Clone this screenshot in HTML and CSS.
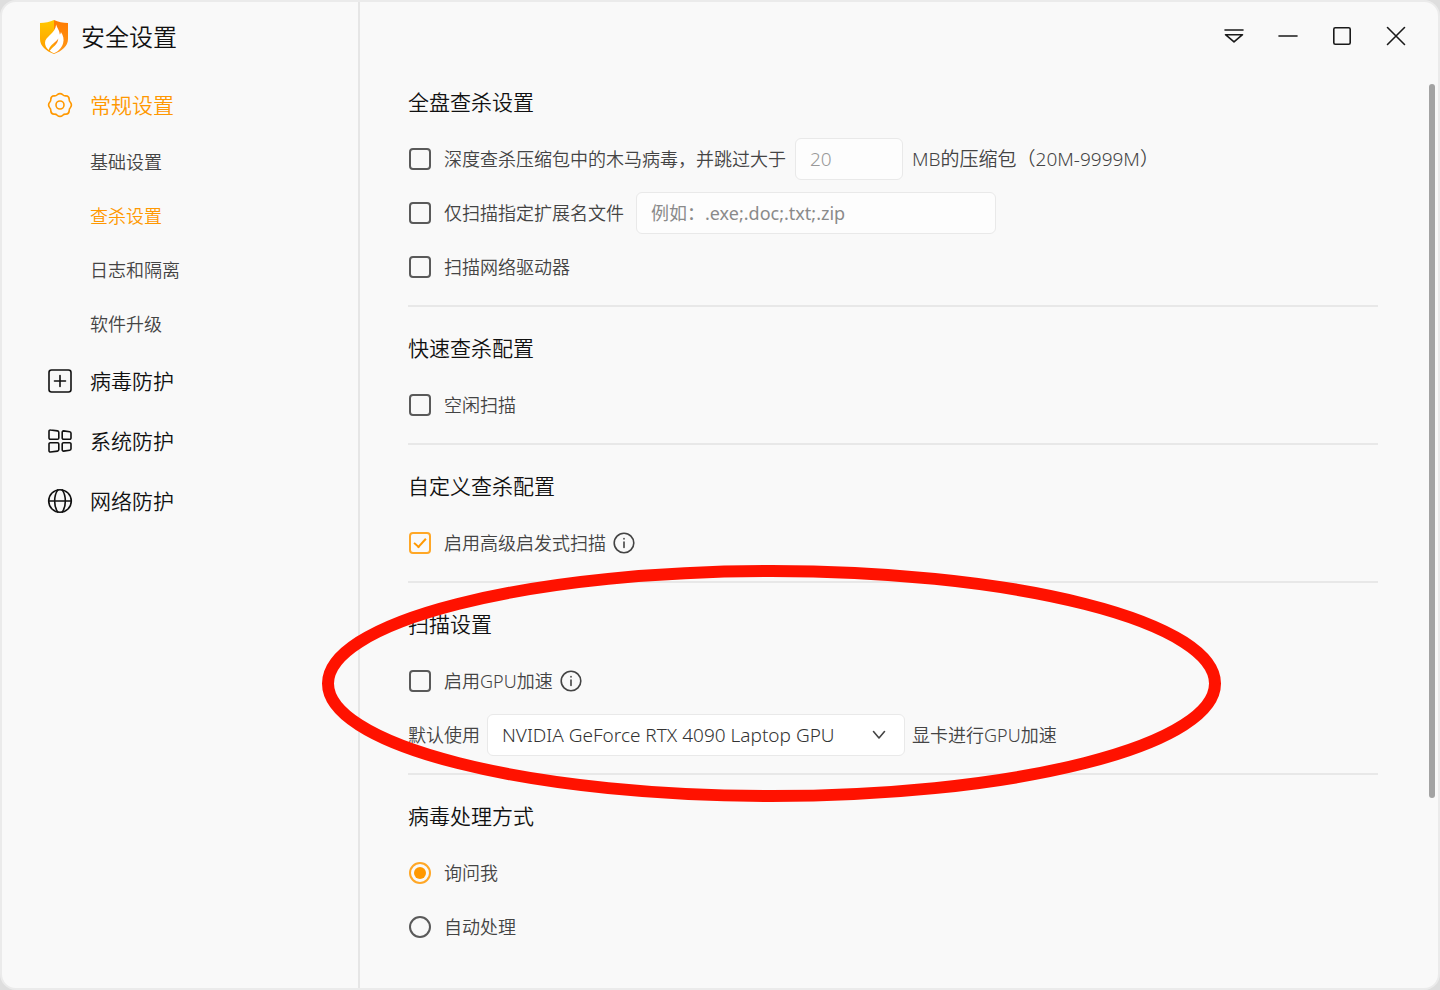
FILE: index.html
```html
<!DOCTYPE html>
<html lang="zh-CN">
<head>
<meta charset="utf-8">
<title>安全设置</title>
<link rel="stylesheet" href="styles.css">
</head>
<body>
<div class="window">
  <aside class="sidebar">
    <div class="brand">
      <svg class="brand-logo" width="30" height="36" viewBox="0 0 30 36" aria-hidden="true">
        <defs>
          <linearGradient id="gold" x1="0" y1="0" x2="0" y2="1"><stop offset="0" stop-color="#ffc800"/><stop offset="1" stop-color="#ff9a00"/></linearGradient>
          <linearGradient id="amber" x1="0" y1="0" x2="0" y2="1"><stop offset="0" stop-color="#ff7a00"/><stop offset="1" stop-color="#ff9a1a"/></linearGradient>
        </defs>
        <path d="M15 1C11 3 6 4 1 4v16c0 7 6 12 14 15z" fill="url(#gold)"/>
        <path d="M15 1c4 2 9 3 14 3v16c0 7-6 12-14 15z" fill="url(#amber)"/>
        <path d="M17.200 5.500C18 9 20.500 11 20.800 15.500c.8-.8 1-1.600 1.100-2.500 2.500 3.500 3.300 7.500 2.200 11.200C22.500 29.500 19 32.500 15 34.300c-1.500-.6-3-1.400-4.300-2.500 2.800-3.800 8.300-6.300 8.600-12.300-2.500 4-8.300 6-9.500 11.500C7.300 29 6 26.500 6 23.700c0-6 10.200-9 11.200-18.200z" fill="#fff"/>
      </svg>
      <h1 class="brand-title">安全设置</h1>
    </div>
    <nav class="nav">
      <a class="nav-item active" href="#general">
        <svg class="icon" width="26" height="26" viewBox="0 0 26 26" aria-hidden="true"><path d="M10.300 2.700Q13 .5 15.700 2.700Q17 4 18.900 3.800Q22 4 22.200 7.100Q22 9 23.300 10.300Q25.500 13 23.300 15.700Q22 17 22.200 18.900Q22 22 18.900 22.200Q17 22 15.700 23.300Q13 25.500 10.300 23.300Q9 22 7.100 22.200Q4 22 3.800 18.900Q4 17 2.700 15.700Q.5 13 2.700 10.300Q4 9 3.800 7.100Q4 4 7.100 3.800Q9 4 10.300 2.700Z"/><circle cx="13" cy="13" r="4"/></svg>
        <span>常规设置</span>
      </a>
      <a class="nav-sub" href="#basic">基础设置</a>
      <a class="nav-sub active" href="#scan">查杀设置</a>
      <a class="nav-sub" href="#logs">日志和隔离</a>
      <a class="nav-sub" href="#update">软件升级</a>
      <a class="nav-item" href="#virus">
        <svg class="icon" width="26" height="26" viewBox="0 0 26 26" aria-hidden="true"><rect x="2" y="2" width="22" height="22" rx="2.500"/><path d="M13 7.500v11M7.500 13h11"/></svg>
        <span>病毒防护</span>
      </a>
      <a class="nav-item" href="#system">
        <svg class="icon" width="26" height="26" viewBox="0 0 26 26" aria-hidden="true"><path d="M3.500 2l7 .9a1.500 1.500 0 0 1 1.300 1.500V10a1.300 1.300 0 0 1-1.300 1.300H3.300A1.300 1.300 0 0 1 2 10V3.400A1.300 1.300 0 0 1 3.500 2zM16.500 2.900l6.200.9A1.500 1.500 0 0 1 24 5.300V10a1.300 1.300 0 0 1-1.300 1.300h-6.200A1.300 1.300 0 0 1 15.200 10V4.200a1.300 1.300 0 0 1 1.300-1.300zM3.300 14.700h7.200a1.300 1.300 0 0 1 1.300 1.300v5.600a1.500 1.500 0 0 1-1.300 1.500l-7 .9A1.300 1.300 0 0 1 2 22.600V16a1.300 1.300 0 0 1 1.300-1.300zM16.500 14.700h6.200A1.300 1.300 0 0 1 24 16v4.700a1.500 1.500 0 0 1-1.300 1.500l-6.200.9a1.300 1.300 0 0 1-1.300-1.300V16a1.300 1.300 0 0 1 1.300-1.300z"/></svg>
        <span>系统防护</span>
      </a>
      <a class="nav-item" href="#network">
        <svg class="icon" width="26" height="26" viewBox="0 0 26 26" aria-hidden="true"><circle cx="13" cy="13" r="11.300"/><path d="M1.700 13h22.600M10.800 1.900C6.600 8 6.600 18 10.800 24.100M15.200 1.900C19.400 8 19.400 18 15.200 24.100"/></svg>
        <span>网络防护</span>
      </a>
    </nav>
  </aside>

  <main class="main">
    <header class="controls">
      <button class="control" type="button" aria-label="菜单"><svg width="20" height="20" viewBox="0 0 20 20"><path d="M1 4h18M1.500 8.700h17L10 15.900z"/></svg></button>
      <button class="control" type="button" aria-label="最小化"><svg width="20" height="20" viewBox="0 0 20 20"><path d="M1 10h18"/></svg></button>
      <button class="control" type="button" aria-label="最大化"><svg width="20" height="20" viewBox="0 0 20 20"><rect x="1.800" y="1.800" width="16.400" height="16.400" rx="1.500"/></svg></button>
      <button class="control" type="button" aria-label="关闭"><svg width="20" height="20" viewBox="0 0 20 20"><path d="M1.500 1.500l17 17M18.500 1.500l-17 17"/></svg></button>
    </header>

    <div class="content">
      <section class="section">
        <h2 class="heading">全盘查杀设置</h2>
        <div class="row wide-gap">
          <label class="choice"><input class="tick" type="checkbox">深度查杀压缩包中的木马病毒，并跳过大于</label>
          <input class="field size-field" type="text" value="20" aria-label="压缩包大小" disabled>
          <span class="unit">MB的压缩包（20M-9999M）</span>
        </div>
        <div class="row wider-gap">
          <label class="choice"><input class="tick" type="checkbox">仅扫描指定扩展名文件</label>
          <input class="field ext-field" type="text" placeholder="例如：.exe;.doc;.txt;.zip" aria-label="扩展名">
        </div>
        <div class="row"><label class="choice"><input class="tick" type="checkbox">扫描网络驱动器</label></div>
      </section>

      <section class="section">
        <h2 class="heading">快速查杀配置</h2>
        <div class="row"><label class="choice"><input class="tick" type="checkbox">空闲扫描</label></div>
      </section>

      <section class="section">
        <h2 class="heading">自定义查杀配置</h2>
        <div class="row">
          <label class="choice"><input class="tick" type="checkbox" checked>启用高级启发式扫描</label>
          <svg class="info" width="22" height="22" viewBox="0 0 22 22" aria-hidden="true"><circle cx="11" cy="11" r="9.800"/><path d="M11 10v5.500M11 6.500v.4"/></svg>
        </div>
      </section>

      <section class="section">
        <h2 class="heading">扫描设置</h2>
        <div class="row">
          <label class="choice"><input class="tick" type="checkbox">启用GPU加速</label>
          <svg class="info" width="22" height="22" viewBox="0 0 22 22" aria-hidden="true"><circle cx="11" cy="11" r="9.800"/><path d="M11 10v5.500M11 6.500v.4"/></svg>
        </div>
        <div class="row">
          <label for="gpu">默认使用</label>
          <div class="select-box">
            <select class="field select" id="gpu"><option>NVIDIA GeForce RTX 4090 Laptop GPU</option></select>
            <svg class="chevron" width="14" height="10" viewBox="0 0 14 10" aria-hidden="true"><path d="M1.500 1.500L7 8l5.500-6.500"/></svg>
          </div>
          <span>显卡进行GPU加速</span>
        </div>
        <svg class="ring" width="900" height="238" viewBox="0 0 900 238" aria-hidden="true"><ellipse cx="449.500" cy="118.500" rx="443.500" ry="112.500"/></svg>
      </section>

      <section class="section">
        <h2 class="heading">病毒处理方式</h2>
        <div class="row"><label class="choice"><input class="dot" type="radio" name="handling" checked>询问我</label></div>
        <div class="row"><label class="choice"><input class="dot" type="radio" name="handling">自动处理</label></div>
      </section>
    </div>
    <div class="scroll-thumb"></div>
  </main>
</div>
</body>
</html>
```
FILE: styles.css
```css
* { box-sizing: border-box; }

body {
  margin: 0;
  background: #dedede;
  color: #444;
  font: 350 18px/26px "Noto Sans", "Noto Sans CJK SC", sans-serif;
}

.window {
  display: flex;
  min-height: 100vh;
  border: 2px solid #ebebeb;
  border-radius: 16px;
  background: #f9f9f9;
}

.sidebar {
  flex: 0 0 358px;
  border-right: 2px solid #e6e6e6;
}

.brand {
  display: flex;
  align-items: center;
  gap: 12px;
  height: 69px;
  margin-bottom: 4px;
  padding-left: 37px;
}

.brand-title {
  margin: 0;
  color: #111;
  font-size: 24px;
  font-weight: 350;
  line-height: 36px;
}

.nav {
  display: flex;
  flex-direction: column;
}

.nav-item,
.nav-sub {
  display: flex;
  align-items: center;
  color: #444;
  text-decoration: none;
}

.nav-item {
  gap: 17px;
  height: 60px;
  padding-left: 45px;
  color: #111;
  font-size: 21px;
}

.nav-sub {
  height: 54px;
  padding-left: 88px;
}

.nav .active { color: #ff9800; }

.icon,
.control svg,
.info,
.chevron {
  flex: none;
  fill: none;
  stroke: currentColor;
  stroke-width: 1.6;
  stroke-linecap: round;
  stroke-linejoin: round;
}

.main {
  position: relative;
  flex: 1;
  min-width: 0;
}

.controls {
  display: flex;
  justify-content: flex-end;
  align-items: center;
  gap: 18px;
  height: 68px;
  padding-right: 24px;
}

.control {
  display: grid;
  place-items: center;
  width: 36px;
  height: 36px;
  padding: 0;
  border: 0;
  background: none;
  color: #1a1a1a;
}

.content { padding: 17px 60px 20px 48px; }

.section {
  position: relative;
  padding-bottom: 11px;
}

.section + .section {
  padding-top: 26px;
  border-top: 2px solid #e8e8e8;
}

.heading {
  margin: 0 0 15px;
  color: #111;
  font-size: 21px;
  font-weight: 350;
  line-height: 30px;
}

.row {
  display: flex;
  align-items: center;
  gap: 7px;
  height: 54px;
}

.wide-gap { gap: 9px; }
.wider-gap { gap: 12px; }

.choice {
  display: flex;
  align-items: center;
  gap: 13px;
}

.unit { font-size: 19px; }

.tick,
.dot {
  display: grid;
  place-items: center;
  flex: none;
  width: 22px;
  height: 22px;
  margin: 0 0 0 1px;
  border: 2px solid #5a5a5a;
  appearance: none;
}

.tick { border-radius: 4px; }
.dot { border-radius: 50%; }

.tick:checked,
.dot:checked { border-color: #ffa726; }

.tick:checked::before {
  content: "";
  width: 10px;
  height: 5px;
  margin-bottom: 3px;
  border: solid #ff9800;
  border-width: 0 0 2px 2px;
  transform: rotate(-48deg);
}

.dot:checked::before {
  content: "";
  width: 12px;
  height: 12px;
  border-radius: 50%;
  background: #ff9800;
}

.field {
  height: 42px;
  padding: 0 14px;
  border: 1px solid #e9e9e9;
  border-radius: 6px;
  background: #fdfdfd;
  color: #333;
  font: inherit;
  appearance: none;
}

.size-field {
  width: 108px;
  color: #999;
  font-size: 19px;
}

.ext-field {
  width: 360px;
  font-weight: 400;
}

.ext-field::placeholder { color: #8a8a8a; }

.select-box { position: relative; }

.select {
  width: 418px;
  background: #fff;
  font-size: 19px;
}

.chevron {
  position: absolute;
  top: 16px;
  right: 19px;
}

.ring {
  position: absolute;
  top: -18px;
  left: -86px;
  z-index: 1;
  fill: none;
  stroke: #ff1200;
  stroke-width: 12;
  pointer-events: none;
}

.scroll-thumb {
  position: absolute;
  top: 82px;
  right: 3px;
  width: 6px;
  height: 714px;
  border-radius: 3px;
  background: #a3a3a3;
}
```
